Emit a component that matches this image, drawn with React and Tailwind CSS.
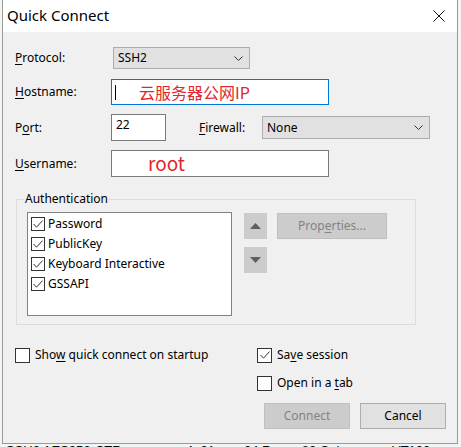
import { useState } from 'react'

const ui = { fontFamily: '"Noto Sans", "Open Sans", sans-serif' }
const cjk = { fontFamily: '"Noto Sans CJK SC", "Noto Sans", sans-serif' }

function Check({ checked, size = 14 }) {
  return (
    <span
      className="flex-shrink-0 flex items-center justify-center bg-white border border-[#333333]"
      style={{ width: size, height: size }}
    >
      {checked && (
        <svg width="12" height="12" viewBox="0 0 12 12" fill="none">
          <path d="M1.5 6 L4.5 9.2 L10.5 2.6" stroke="#333333" strokeWidth="1" />
        </svg>
      )}
    </span>
  )
}

function Chevron() {
  return (
    <svg width="9" height="5" viewBox="0 0 9 5" fill="none">
      <path d="M0.5 0.5 L4.5 4.5 L8.5 0.5" stroke="#333333" strokeWidth="1" />
    </svg>
  )
}

function Select({ value, className }) {
  return (
    <div className={`flex items-center justify-between pl-[4px] pr-[6px] bg-[#e1e1e1] border border-[#adadad] ${className}`}>
      <span>{value}</span>
      <Chevron />
    </div>
  )
}

// label with access-key underline
function Label({ before = '', k, after = '', className = '' }) {
  return (
    <span className={className}>
      {before}<u className="underline decoration-1 underline-offset-2">{k}</u>{after}
    </span>
  )
}

export default function App() {
  const [auth, setAuth] = useState([
    { name: 'Password', on: true },
    { name: 'PublicKey', on: true },
    { name: 'Keyboard Interactive', on: true },
    { name: 'GSSAPI', on: true },
  ])
  const [saveSession, setSaveSession] = useState(true)
  const [showOnStartup, setShowOnStartup] = useState(false)
  const [openInTab, setOpenInTab] = useState(false)

  const toggle = i => setAuth(a => a.map((x, j) => (j === i ? { ...x, on: !x.on } : x)))

  return (
    <div className="w-[461px] h-[447px] overflow-hidden bg-[#f4f4f4] text-[12px] text-black" style={ui}>
      {/* Dialog */}
      <div className="ml-[2px] w-[456px] h-[444px] flex flex-col border-l border-r border-b border-[#9a9a9a]">
        {/* Title bar */}
        <div className="h-[32px] flex-shrink-0 bg-white flex items-center justify-between pl-[4px] pr-[12px]">
          <span className="text-[15px] leading-none -mt-[2px]">Quick Connect</span>
          <svg width="12" height="12" viewBox="0 0 12 12" fill="none">
            <path d="M0.5 0.5 L11.5 11.5 M11.5 0.5 L0.5 11.5" stroke="#111111" strokeWidth="1" />
          </svg>
        </div>

        {/* Body */}
        <div className="flex-1 bg-[#f0f0f0] pl-[12px] pr-[10px] pt-[15px]">
          {/* Protocol */}
          <div className="flex items-center h-[22px]">
            <Label k="P" after="rotocol:" className="w-[98px]" />
            <Select value="SSH2" className="w-[137px] h-[22px]" />
          </div>

          {/* Hostname */}
          <div className="flex items-center h-[26px] mt-[10px]">
            <Label k="H" after="ostname:" className="w-[96px]" />
            <div className="w-[218px] h-[26px] bg-white border border-[#0078d7] flex items-center pl-[3px]">
              <span className="w-px h-[15px] bg-black" />
              <span className="ml-[23px] text-[16px] leading-none text-[#e3262a]" style={cjk}>云服务器公网IP</span>
            </div>
          </div>

          {/* Port / Firewall */}
          <div className="flex items-center h-[27px] mt-[9px]">
            <Label before="P" k="o" after="rt:" className="w-[96px]" />
            <div className="w-[55px] h-[27px] bg-white border border-[#7a7a7a] pl-[4px] pt-[2px] leading-[16px]">22</div>
            <Label k="F" after="irewall:" className="ml-[33px] w-[63px]" />
            <Select value="None" className="w-[168px] h-[23px]" />
          </div>

          {/* Username */}
          <div className="flex items-center h-[27px] mt-[9px]">
            <Label k="U" after="sername:" className="w-[96px]" />
            <div className="w-[218px] h-[27px] bg-white border border-[#7a7a7a] flex items-center pl-[36px]">
              <span className="text-[19px] leading-none text-[#e3262a] -mt-[3px]" style={cjk}>root</span>
            </div>
          </div>

          {/* Authentication */}
          <fieldset className="ml-[1px] mt-[14px] w-[400px] h-[134px] border border-[#dcdcdc] pl-[10px] pt-[5px]">
            <legend className="-ml-[3px] px-[1px] leading-[16px]">Authentication</legend>
            <div className="flex">
              <div className="w-[205px] h-[104px] bg-white border border-[#828282] pt-[1px] pl-[3px]">
                {auth.map((a, i) => (
                  <div key={a.name} onClick={() => toggle(i)} className="h-[20px] flex items-center gap-[3px] cursor-default">
                    <Check checked={a.on} />
                    <span>{a.name}</span>
                  </div>
                ))}
              </div>
              <div className="ml-[12px] flex flex-col gap-[8px] pt-[1px]">
                <div className="w-[23px] h-[26px] bg-[#cccccc] flex items-center justify-center">
                  <svg width="11" height="6" viewBox="0 0 11 6"><path d="M0 6 L5.5 0 L11 6 Z" fill="#5f5f5f" /></svg>
                </div>
                <div className="w-[23px] h-[26px] bg-[#cccccc] flex items-center justify-center">
                  <svg width="11" height="6" viewBox="0 0 11 6"><path d="M0 0 L11 0 L5.5 6 Z" fill="#5f5f5f" /></svg>
                </div>
              </div>
              <div className="ml-[10px] mt-[1px] w-[110px] h-[26px] bg-[#cccccc] border border-[#bfbfbf] flex items-center justify-center text-[#838383]">
                <Label before="Prop" k="e" after="rties..." />
              </div>
            </div>
          </fieldset>

          {/* Options */}
          <div className="mt-[22px] flex h-[16px] items-center">
            <div className="w-[242px] flex items-center gap-[5px]" onClick={() => setShowOnStartup(v => !v)}>
              <Check checked={showOnStartup} size={15} />
              <Label before="Sho" k="w" after=" quick connect on startup" />
            </div>
            <div className="flex items-center gap-[5px]" onClick={() => setSaveSession(v => !v)}>
              <Check checked={saveSession} size={15} />
              <Label before="Sa" k="v" after="e session" />
            </div>
          </div>
          <div className="mt-[12px] flex h-[16px] items-center pl-[242px]">
            <div className="flex items-center gap-[5px]" onClick={() => setOpenInTab(v => !v)}>
              <Check checked={openInTab} size={15} />
              <Label before="Open in a " k="t" after="ab" />
            </div>
          </div>

          {/* Buttons */}
          <div className="mt-[12px] flex justify-end gap-[10px] pr-[1px]">
            <button className="w-[86px] h-[26px] bg-[#cccccc] border border-[#bfbfbf] text-[#838383]">Connect</button>
            <button className="w-[86px] h-[26px] bg-[#e1e1e1] border border-[#adadad]">Cancel</button>
          </div>
        </div>
      </div>

      {/* Terminal status line behind the dialog */}
      <div className="h-[3px] overflow-hidden flex text-[13px] leading-none whitespace-nowrap" style={{ fontFamily: '"Liberation Sans", sans-serif' }}>
        <span className="ml-[6px] w-[180px]">SSH2 AES256-CTR</span>
        <span className="w-[58px]">4, 31</span>
        <span className="w-[148px]">24 Rows, 80 Cols</span>
        <span>VT100</span>
      </div>
    </div>
  )
}
